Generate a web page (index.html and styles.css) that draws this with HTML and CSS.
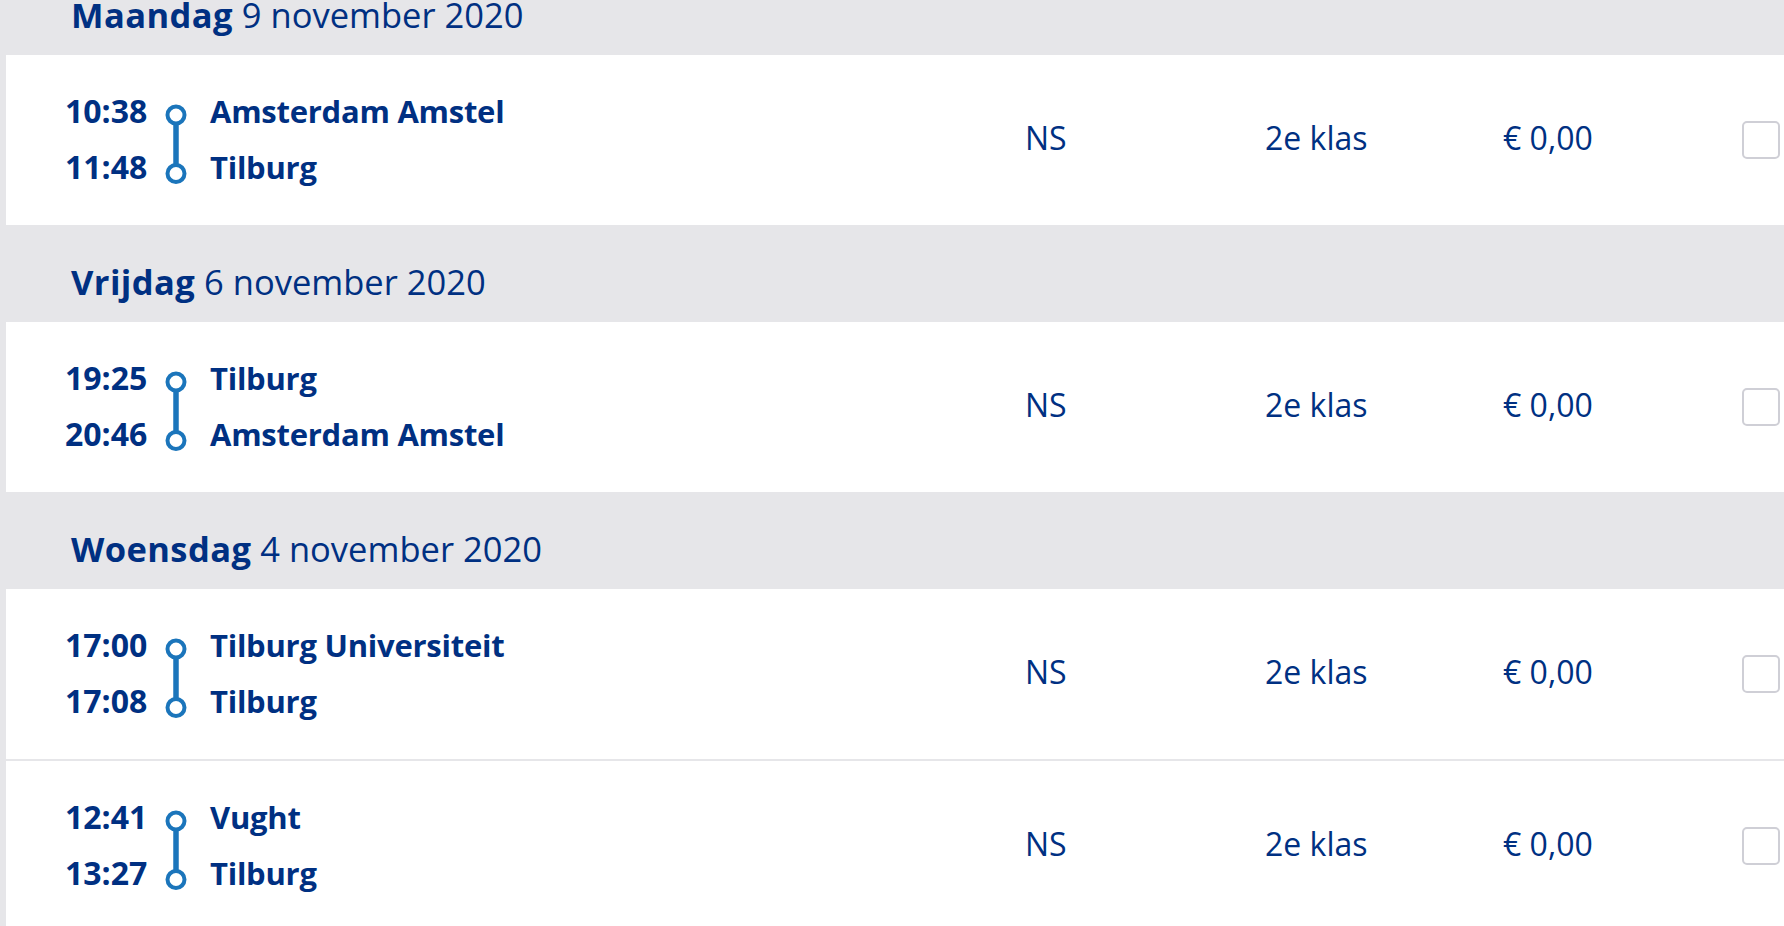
FILE: index.html
```html
<!DOCTYPE html>
<html lang="nl">
<head>
<meta charset="utf-8">
<title>Reizen</title>
<link rel="stylesheet" href="styles.css">
</head>
<body>
<main class="journeys">
  <section class="day">
    <h2 class="day-title"><strong>Maandag</strong> 9 november 2020</h2>
    <div class="trip">
      <div class="route">
        <span class="time">10:38</span>
        <svg class="route-line" width="22" height="81" viewBox="0 0 22 81" aria-hidden="true">
          <line x1="11" y1="20" x2="11" y2="61" stroke="#1b75bb" stroke-width="5.5"/>
          <circle cx="11" cy="11" r="8.5" fill="none" stroke="#1b75bb" stroke-width="4"/>
          <circle cx="11" cy="69.5" r="8.5" fill="none" stroke="#1b75bb" stroke-width="4"/>
        </svg>
        <span class="station">Amsterdam Amstel</span>
        <span class="time">11:48</span>
        <span class="station">Tilburg</span>
      </div>
      <div class="cell cell-op">NS</div>
      <div class="cell">2e klas</div>
      <div class="cell">€ 0,00</div>
      <div class="check"><span class="checkbox"></span></div>
    </div>
  </section>

  <section class="day">
    <h2 class="day-title"><strong>Vrijdag</strong> 6 november 2020</h2>
    <div class="trip">
      <div class="route">
        <span class="time">19:25</span>
        <svg class="route-line" width="22" height="81" viewBox="0 0 22 81" aria-hidden="true">
          <line x1="11" y1="20" x2="11" y2="61" stroke="#1b75bb" stroke-width="5.5"/>
          <circle cx="11" cy="11" r="8.5" fill="none" stroke="#1b75bb" stroke-width="4"/>
          <circle cx="11" cy="69.5" r="8.5" fill="none" stroke="#1b75bb" stroke-width="4"/>
        </svg>
        <span class="station">Tilburg</span>
        <span class="time">20:46</span>
        <span class="station">Amsterdam Amstel</span>
      </div>
      <div class="cell cell-op">NS</div>
      <div class="cell">2e klas</div>
      <div class="cell">€ 0,00</div>
      <div class="check"><span class="checkbox"></span></div>
    </div>
  </section>

  <section class="day">
    <h2 class="day-title"><strong>Woensdag</strong> 4 november 2020</h2>
    <div class="trip">
      <div class="route">
        <span class="time">17:00</span>
        <svg class="route-line" width="22" height="81" viewBox="0 0 22 81" aria-hidden="true">
          <line x1="11" y1="20" x2="11" y2="61" stroke="#1b75bb" stroke-width="5.5"/>
          <circle cx="11" cy="11" r="8.5" fill="none" stroke="#1b75bb" stroke-width="4"/>
          <circle cx="11" cy="69.5" r="8.5" fill="none" stroke="#1b75bb" stroke-width="4"/>
        </svg>
        <span class="station">Tilburg Universiteit</span>
        <span class="time">17:08</span>
        <span class="station">Tilburg</span>
      </div>
      <div class="cell cell-op">NS</div>
      <div class="cell">2e klas</div>
      <div class="cell">€ 0,00</div>
      <div class="check"><span class="checkbox"></span></div>
    </div>
    <div class="trip">
      <div class="route">
        <span class="time">12:41</span>
        <svg class="route-line" width="22" height="81" viewBox="0 0 22 81" aria-hidden="true">
          <line x1="11" y1="20" x2="11" y2="61" stroke="#1b75bb" stroke-width="5.5"/>
          <circle cx="11" cy="11" r="8.5" fill="none" stroke="#1b75bb" stroke-width="4"/>
          <circle cx="11" cy="69.5" r="8.5" fill="none" stroke="#1b75bb" stroke-width="4"/>
        </svg>
        <span class="station">Vught</span>
        <span class="time">13:27</span>
        <span class="station">Tilburg</span>
      </div>
      <div class="cell cell-op">NS</div>
      <div class="cell">2e klas</div>
      <div class="cell">€ 0,00</div>
      <div class="check"><span class="checkbox"></span></div>
    </div>
  </section>
</main>
</body>
</html>
```

FILE: styles.css
```css
html, body {
  margin: 0;
  padding: 0;
  background: #e6e6e9;
  overflow: hidden;
}

body {
  font-family: "Open Sans", "Noto Sans", sans-serif;
  color: #003082;
  font-size: 32px;
}

.journeys {
  margin: -42px 0 0 6px;
  display: flex;
  flex-direction: column;
}

.day {
  display: flex;
  flex-direction: column;
  gap: 2px;
}

.day-title {
  box-sizing: border-box;
  height: 97px;
  margin: 0 0 -2px 0;
  padding: 37px 0 0 65px;
  font-size: 34.5px;
  line-height: 40px;
  font-weight: 400;
  white-space: nowrap;
}

.day-title strong {
  font-weight: 700;
  letter-spacing: 0.4px;
}

.trip {
  box-sizing: border-box;
  height: 170px;
  background: #ffffff;
  padding-left: 59px;
  display: grid;
  grid-template-columns: 960px 240px 238px 239px 38px;
  align-items: center;
}

.route {
  align-self: start;
  padding-top: 28px;
  display: grid;
  grid-template-columns: 100px 22px 1fr;
  grid-template-rows: 56px 56px;
  font-weight: 700;
  line-height: 56px;
  white-space: nowrap;
}

.time {
  grid-column: 1;
}

.station {
  grid-column: 3;
  padding-left: 23px;
  font-size: 31px;
  letter-spacing: -0.25px;
}

.route-line {
  grid-column: 2;
  grid-row: 1 / span 2;
  margin-top: 21px;
  display: block;
}

.cell {
  line-height: 40px;
  margin-bottom: 4px;
  white-space: nowrap;
}

.check {
  display: flex;
}

.checkbox {
  box-sizing: border-box;
  width: 38px;
  height: 38px;
  border: 2px solid #cfcfd6;
  border-radius: 5px;
  background: #ffffff;
}
```
